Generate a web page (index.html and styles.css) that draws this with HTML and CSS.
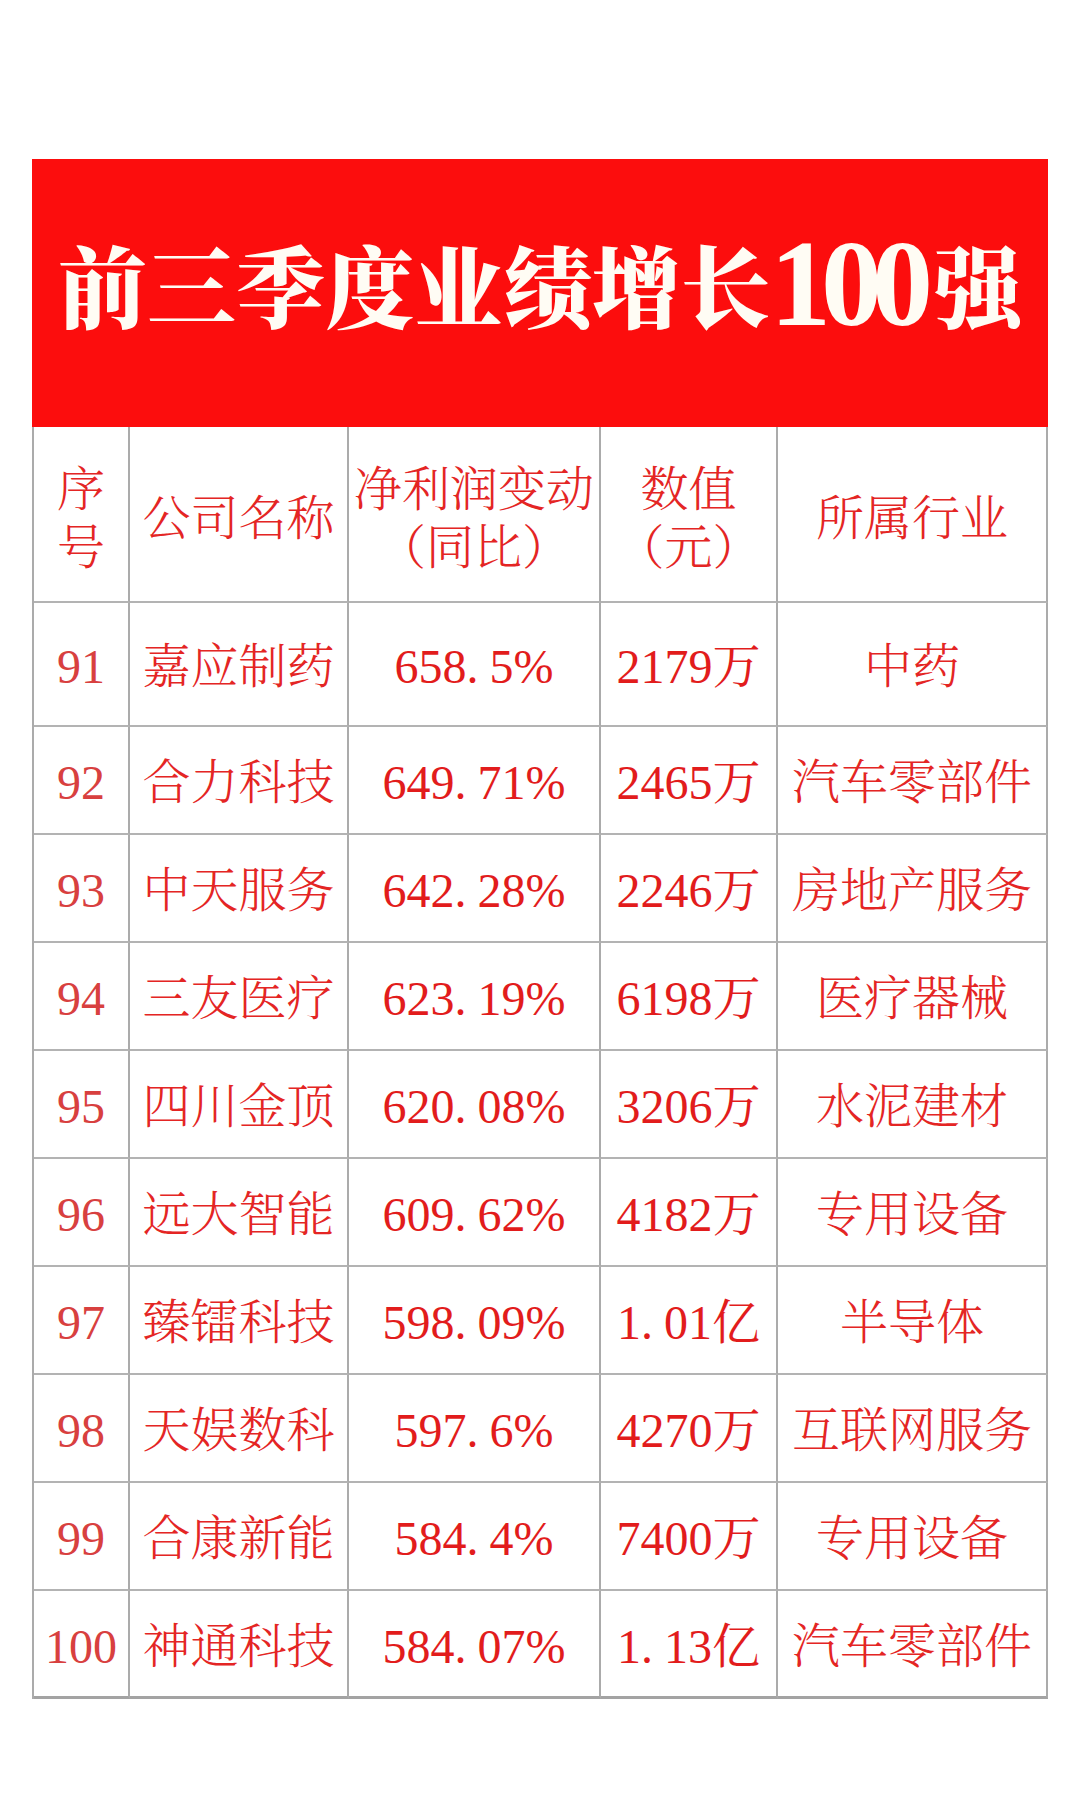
FILE: index.html
```html
<!DOCTYPE html>
<html lang="zh-CN">
<head>
<meta charset="utf-8">
<title>前三季度业绩增长100强</title>
<link rel="stylesheet" href="styles.css">
</head>
<body>
<main class="sheet">
  <header class="banner">
    <h1 class="banner-title">前三季度业绩增长<span class="banner-num">100</span>强</h1>
  </header>
  <section class="grid">
    <div class="cell head">序<br>号</div>
    <div class="cell head">公司名称</div>
    <div class="cell head">净利润变动<br>（同比）</div>
    <div class="cell head">数值<br>（元）</div>
    <div class="cell head">所属行业</div>

    <div class="cell seq">91</div>
    <div class="cell">嘉应制药</div>
    <div class="cell num">658<span class="dot">.</span>5%</div>
    <div class="cell num">2179万</div>
    <div class="cell">中药</div>

    <div class="cell seq">92</div>
    <div class="cell">合力科技</div>
    <div class="cell num">649<span class="dot">.</span>71%</div>
    <div class="cell num">2465万</div>
    <div class="cell">汽车零部件</div>

    <div class="cell seq">93</div>
    <div class="cell">中天服务</div>
    <div class="cell num">642<span class="dot">.</span>28%</div>
    <div class="cell num">2246万</div>
    <div class="cell">房地产服务</div>

    <div class="cell seq">94</div>
    <div class="cell">三友医疗</div>
    <div class="cell num">623<span class="dot">.</span>19%</div>
    <div class="cell num">6198万</div>
    <div class="cell">医疗器械</div>

    <div class="cell seq">95</div>
    <div class="cell">四川金顶</div>
    <div class="cell num">620<span class="dot">.</span>08%</div>
    <div class="cell num">3206万</div>
    <div class="cell">水泥建材</div>

    <div class="cell seq">96</div>
    <div class="cell">远大智能</div>
    <div class="cell num">609<span class="dot">.</span>62%</div>
    <div class="cell num">4182万</div>
    <div class="cell">专用设备</div>

    <div class="cell seq">97</div>
    <div class="cell">臻镭科技</div>
    <div class="cell num">598<span class="dot">.</span>09%</div>
    <div class="cell num">1<span class="dot">.</span>01亿</div>
    <div class="cell">半导体</div>

    <div class="cell seq">98</div>
    <div class="cell">天娱数科</div>
    <div class="cell num">597<span class="dot">.</span>6%</div>
    <div class="cell num">4270万</div>
    <div class="cell">互联网服务</div>

    <div class="cell seq">99</div>
    <div class="cell">合康新能</div>
    <div class="cell num">584<span class="dot">.</span>4%</div>
    <div class="cell num">7400万</div>
    <div class="cell">专用设备</div>

    <div class="cell seq">100</div>
    <div class="cell">神通科技</div>
    <div class="cell num">584<span class="dot">.</span>07%</div>
    <div class="cell num">1<span class="dot">.</span>13亿</div>
    <div class="cell">汽车零部件</div>
  </section>
</main>
</body>
</html>
```

FILE: styles.css
```css
* {
  box-sizing: border-box;
}

html, body {
  margin: 0;
  padding: 0;
  background: #ffffff;
}

body {
  font-family: "Liberation Serif", "Noto Serif CJK SC", "Noto Sans CJK SC", serif;
}

.sheet {
  width: 1016px;
  margin: 0 0 0 32px;
  padding-top: 159px;
  padding-bottom: 100px;
}

.banner {
  height: 268px;
  background: #fc0d0d;
  display: flex;
  align-items: center;
  justify-content: center;
  padding-bottom: 20px;
}

.banner-title {
  margin: 0;
  font-family: "Noto Serif CJK SC", "Noto Sans CJK SC", serif;
  font-weight: 900;
  font-size: 89px;
  line-height: 100px;
  color: #fffcf4;
  white-space: nowrap;
  letter-spacing: 0;
}

.banner-num {
  font-family: "Liberation Serif", serif;
  font-weight: 700;
  font-size: 122px;
  letter-spacing: -10px;
  margin-right: 10px;
  vertical-align: -4px;
}

.grid {
  display: grid;
  grid-template-columns: 96px 219px 252px 177px 270px;
  grid-template-rows: 176px 124px repeat(9, 108px);
  border-left: 2px solid #ababab;
}

.cell {
  display: flex;
  align-items: center;
  justify-content: center;
  text-align: center;
  border-right: 2px solid #ababab;
  border-bottom: 2px solid #b3b3b3;
  font-size: 48px;
  line-height: 58px;
  font-weight: 300;
  color: #e42524;
  white-space: nowrap;
  padding-top: 6px;
}

.cell:nth-last-child(-n+5) {
  border-bottom: 3px solid #a3a3a3;
}

.head {
  padding-top: 10px;
  padding-bottom: 0;
}

.seq {
  color: #d8403f;
  font-weight: 400;
}

.num {
  font-weight: 400;
  color: #e21c1c;
}

.dot {
  margin-right: 11px;
}
```
